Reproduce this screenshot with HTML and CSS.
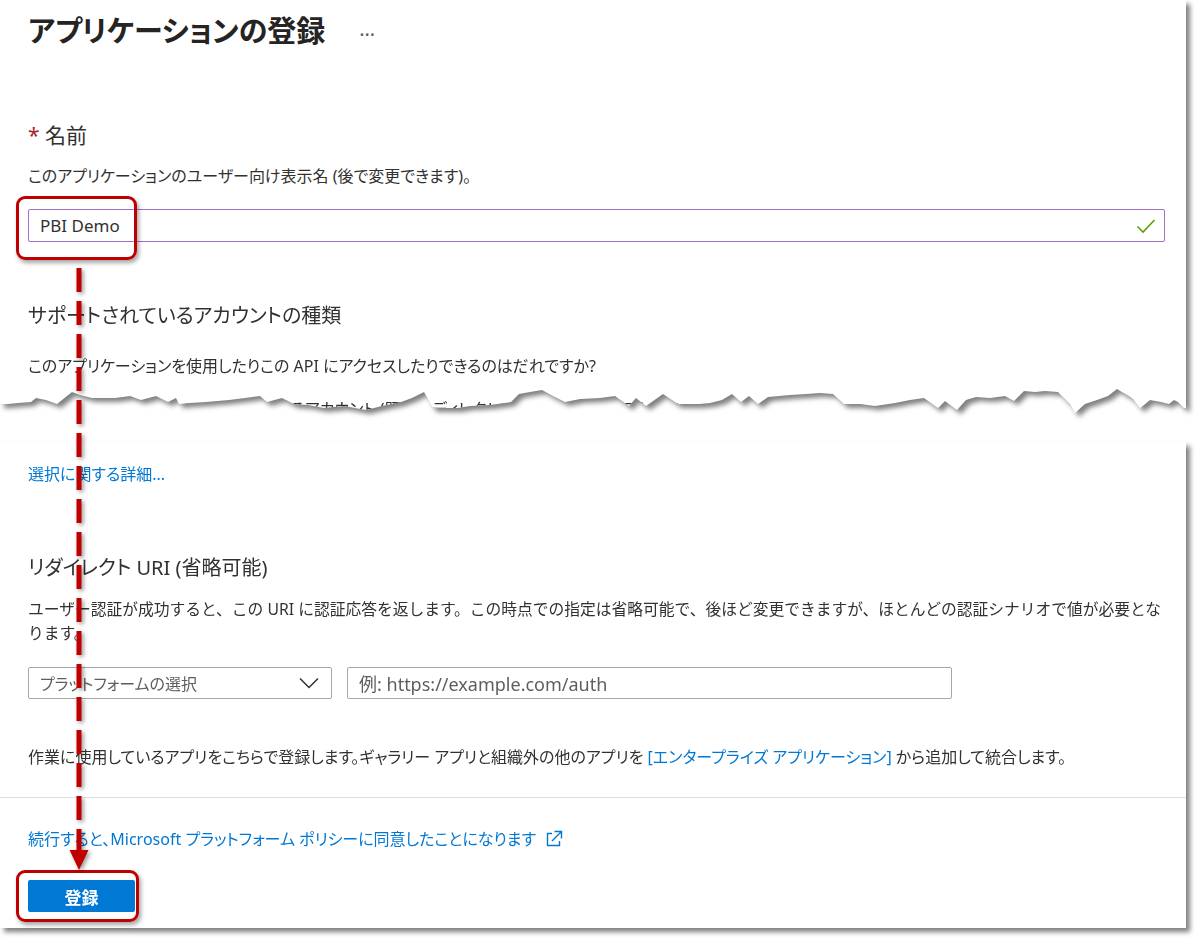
FILE: index.html
```html
<!DOCTYPE html>
<html lang="ja">
<head>
  <meta charset="UTF-8">
  <title>アプリケーションの登録</title>
  <link rel="stylesheet" href="styles.css">
</head>
<body>
  <div class="page">
    <div class="tear">
      <section class="piece piece-top">
        <div class="title-row">
          <h1>アプリケーションの登録</h1>
          <span class="more">…</span>
        </div>

        <label class="field-label"><span class="req">*</span> 名前</label>
        <p class="hint">このアプリケーションのユーザー向け表示名 (後で変更できます)。</p>
        <div class="text-input is-valid">
          <span>PBI Demo</span>
          <svg class="check" width="20" height="16" viewBox="0 0 20 16">
            <polyline points="1.5,8.5 7,14 18.5,2" fill="none" stroke="#57a300" stroke-width="1.6"/>
          </svg>
        </div>

        <h2>サポートされているアカウントの種類</h2>
        <p class="hint">このアプリケーションを使用したりこの API にアクセスしたりできるのはだれですか?</p>
        <div class="radio-row">
          <span class="radio"></span>
          この組織ディレクトリのみに含まれるアカウント (既定のディレクトリのみ - シングル テナント)
        </div>
      </section>
    </div>

    <div class="tear">
      <section class="piece piece-bottom">
        <a class="link" href="#">選択に関する詳細...</a>

        <h2 class="redirect-title">リダイレクト URI (省略可能)</h2>
        <p class="hint wide">ユーザー認証が成功すると、この URI に認証応答を返します。この時点での指定は省略可能で、後ほど変更できますが、ほとんどの認証シナリオで値が必要となります。</p>

        <div class="uri-row">
          <div class="select">
            <span>プラットフォームの選択</span>
            <svg width="20" height="12" viewBox="0 0 20 12">
              <polyline points="1,1.5 10,10.5 19,1.5" fill="none" stroke="#323130" stroke-width="1.5"/>
            </svg>
          </div>
          <div class="text-input uri"><span class="placeholder">例: https://example.com/auth</span></div>
        </div>

        <p class="hint enterprise">作業に使用しているアプリをこちらで登録します。ギャラリー アプリと組織外の他のアプリを <a class="link" href="#">[エンタープライズ アプリケーション]</a> から追加して統合します。</p>

        <div class="divider"></div>

        <a class="link policy" href="#">続行すると、Microsoft プラットフォーム ポリシーに同意したことになります
          <svg width="20" height="20" viewBox="0 0 20 20">
            <path d="M8 4.5H3.5v12h12V12" fill="none" stroke="#0078d4" stroke-width="1.4"/>
            <path d="M10.5 2.5h7v7M17.5 2.5L8 12" fill="none" stroke="#0078d4" stroke-width="1.4"/>
          </svg>
        </a>

        <button class="btn-primary">登録</button>
      </section>
    </div>

    <!-- annotations drawn over the screenshot -->
    <div class="callout callout-name"></div>
    <div class="callout callout-submit"></div>
    <svg class="guide" width="26" height="608" viewBox="0 0 26 608">
      <line x1="13" y1="2" x2="13" y2="588" stroke="#c00000" stroke-width="5" stroke-dasharray="24 9"/>
      <polygon points="3.5,584 22.5,584 13,604" fill="#c00000"/>
    </svg>
  </div>
</body>
</html>
```

FILE: styles.css
```css
body {
  margin: 0;
  background: #fff;
  font-family: "Noto Sans", "Noto Sans CJK JP", sans-serif;
  font-feature-settings: "palt";
  color: #323130;
}
.page {
  position: relative;
  width: 1186px;
  height: 942px;
}
.tear {
  filter: drop-shadow(4px 4px 2.5px rgba(0,0,0,0.5));
}
.piece {
  background: #fff;
  padding: 0 21px 0 28px;
  box-sizing: border-box;
}
.piece-top {
  height: 416px;
  padding-top: 13px;
  clip-path: polygon(0 0, 1186px 0, 1186px 408px, 1184px 408px, 1178px 402px, 1174px 400px, 1169px 404px, 1161px 402px, 1150px 400px, 1144px 405px, 1140px 408px, 1133px 399px, 1129px 396px, 1122px 392px, 1117px 389px, 1108px 396px, 1097px 400px, 1085px 404px, 1075px 413px, 1070px 404px, 1064px 398px, 1058px 392px, 1045px 391px, 1035px 392px, 1024px 391px, 1014px 401px, 1005px 396px, 990px 398px, 976px 397px, 966px 400px, 957px 410px, 945px 401px, 938px 408px, 924px 398px, 910px 400px, 895px 403px, 875px 406px, 860px 404px, 844px 404px, 833px 394px, 820px 393px, 806px 394px, 790px 395px, 768px 397px, 758px 404px, 749px 396px, 741px 402px, 732px 394px, 722px 400px, 710px 403px, 699px 404px, 678px 404px, 663px 394px, 646px 406px, 636px 398px, 629px 406px, 615px 396px, 600px 398px, 580px 399px, 565px 402px, 553px 396px, 542px 390px, 530px 392px, 519px 394px, 511px 402px, 490px 405px, 470px 406px, 458px 408px, 433px 408px, 424px 392px, 412px 398px, 401px 402px, 382px 406px, 366px 410px, 344px 406px, 324px 408px, 308px 405px, 294px 404px, 282px 398px, 267px 402px, 260px 396px, 245px 398px, 229px 400px, 206px 402px, 190px 403px, 179px 404px, 176px 398px, 168px 402px, 156px 396px, 141px 400px, 130px 396px, 115px 398px, 92px 398px, 80px 395px, 72px 392px, 57px 404px, 46px 400px, 36px 398px, 31px 402px, 18px 403px, 8px 404px, 0 404px);
}
.piece-bottom {
  margin-top: 26px;
  height: 486px;
  padding-top: 21px;
}

.title-row {
  display: flex;
  align-items: center;
}
h1 {
  margin: 0;
  font-size: 29px;
  line-height: 36px;
  font-weight: 600;
  color: #252423;
}
.more {
  margin: 0 0 5px 34px;
  font-size: 20px;
  color: #605e5c;
}
h2 {
  margin: 60px 0 0;
  font-size: 20px;
  line-height: 28px;
  font-weight: 400;
}
.field-label {
  display: block;
  margin-top: 72px;
  font-size: 21px;
  line-height: 28px;
}
.req {
  color: #a4262c;
}
.hint {
  margin: 16px 0 0;
  font-size: 16px;
  line-height: 22px;
}
.piece-top h2 + .hint {
  margin-top: 25px;
}
.text-input {
  display: flex;
  align-items: center;
  justify-content: space-between;
  box-sizing: border-box;
  height: 33px;
  margin-top: 22px;
  padding: 0 8px 0 11px;
  border: 1px solid #a86cc9;
  border-radius: 2px;
  font-size: 17px;
}
.radio-row {
  display: flex;
  align-items: center;
  gap: 10px;
  margin-top: 21px;
  font-size: 16px;
  line-height: 22px;
}
.radio {
  width: 16px;
  height: 16px;
  border: 1px solid #0078d4;
  border-radius: 50%;
}

.link {
  color: #0078d4;
  text-decoration: none;
  font-size: 16px;
  line-height: 22px;
}
.redirect-title {
  margin-top: 69px;
}
.hint.wide {
  margin-top: 15px;
  font-size: 15.75px;
  line-height: 24px;
  font-feature-settings: normal;
}
.uri-row {
  display: flex;
  gap: 15px;
  margin-top: 22px;
}
.select {
  display: flex;
  align-items: center;
  justify-content: space-between;
  box-sizing: border-box;
  width: 304px;
  height: 32px;
  padding: 0 12px 0 11px;
  border: 1px solid #a8a6a4;
  border-radius: 2px;
  font-size: 16px;
  color: #605e5c;
}
.text-input.uri {
  width: 605px;
  height: 32px;
  margin-top: 0;
  border-color: #a8a6a4;
  font-size: 18px;
}
.placeholder {
  color: #605e5c;
}
.hint.enterprise {
  margin-top: 47px;
}
.divider {
  margin: 29px -21px 0 -28px;
  border-top: 1px solid #e1dfdd;
}
.policy {
  display: flex;
  align-items: center;
  gap: 8px;
  margin-top: 30px;
}
.btn-primary {
  display: block;
  width: 107px;
  height: 32px;
  margin-top: 30px;
  border: none;
  border-radius: 2px;
  background: #0078d4;
  color: #fff;
  font-family: inherit;
  font-size: 17px;
  font-weight: 700;
}

.callout {
  position: absolute;
  left: 16px;
  box-sizing: border-box;
  border: 3px solid #c00000;
  border-radius: 9px;
  box-shadow: 2px 3px 4px rgba(0,0,0,0.35);
}
.callout-name {
  top: 196px;
  width: 121px;
  height: 64px;
}
.callout-submit {
  top: 870px;
  width: 123px;
  height: 52px;
}
.guide {
  position: absolute;
  left: 66px;
  top: 266px;
  filter: drop-shadow(2px 2px 2px rgba(0,0,0,0.4));
}
```
